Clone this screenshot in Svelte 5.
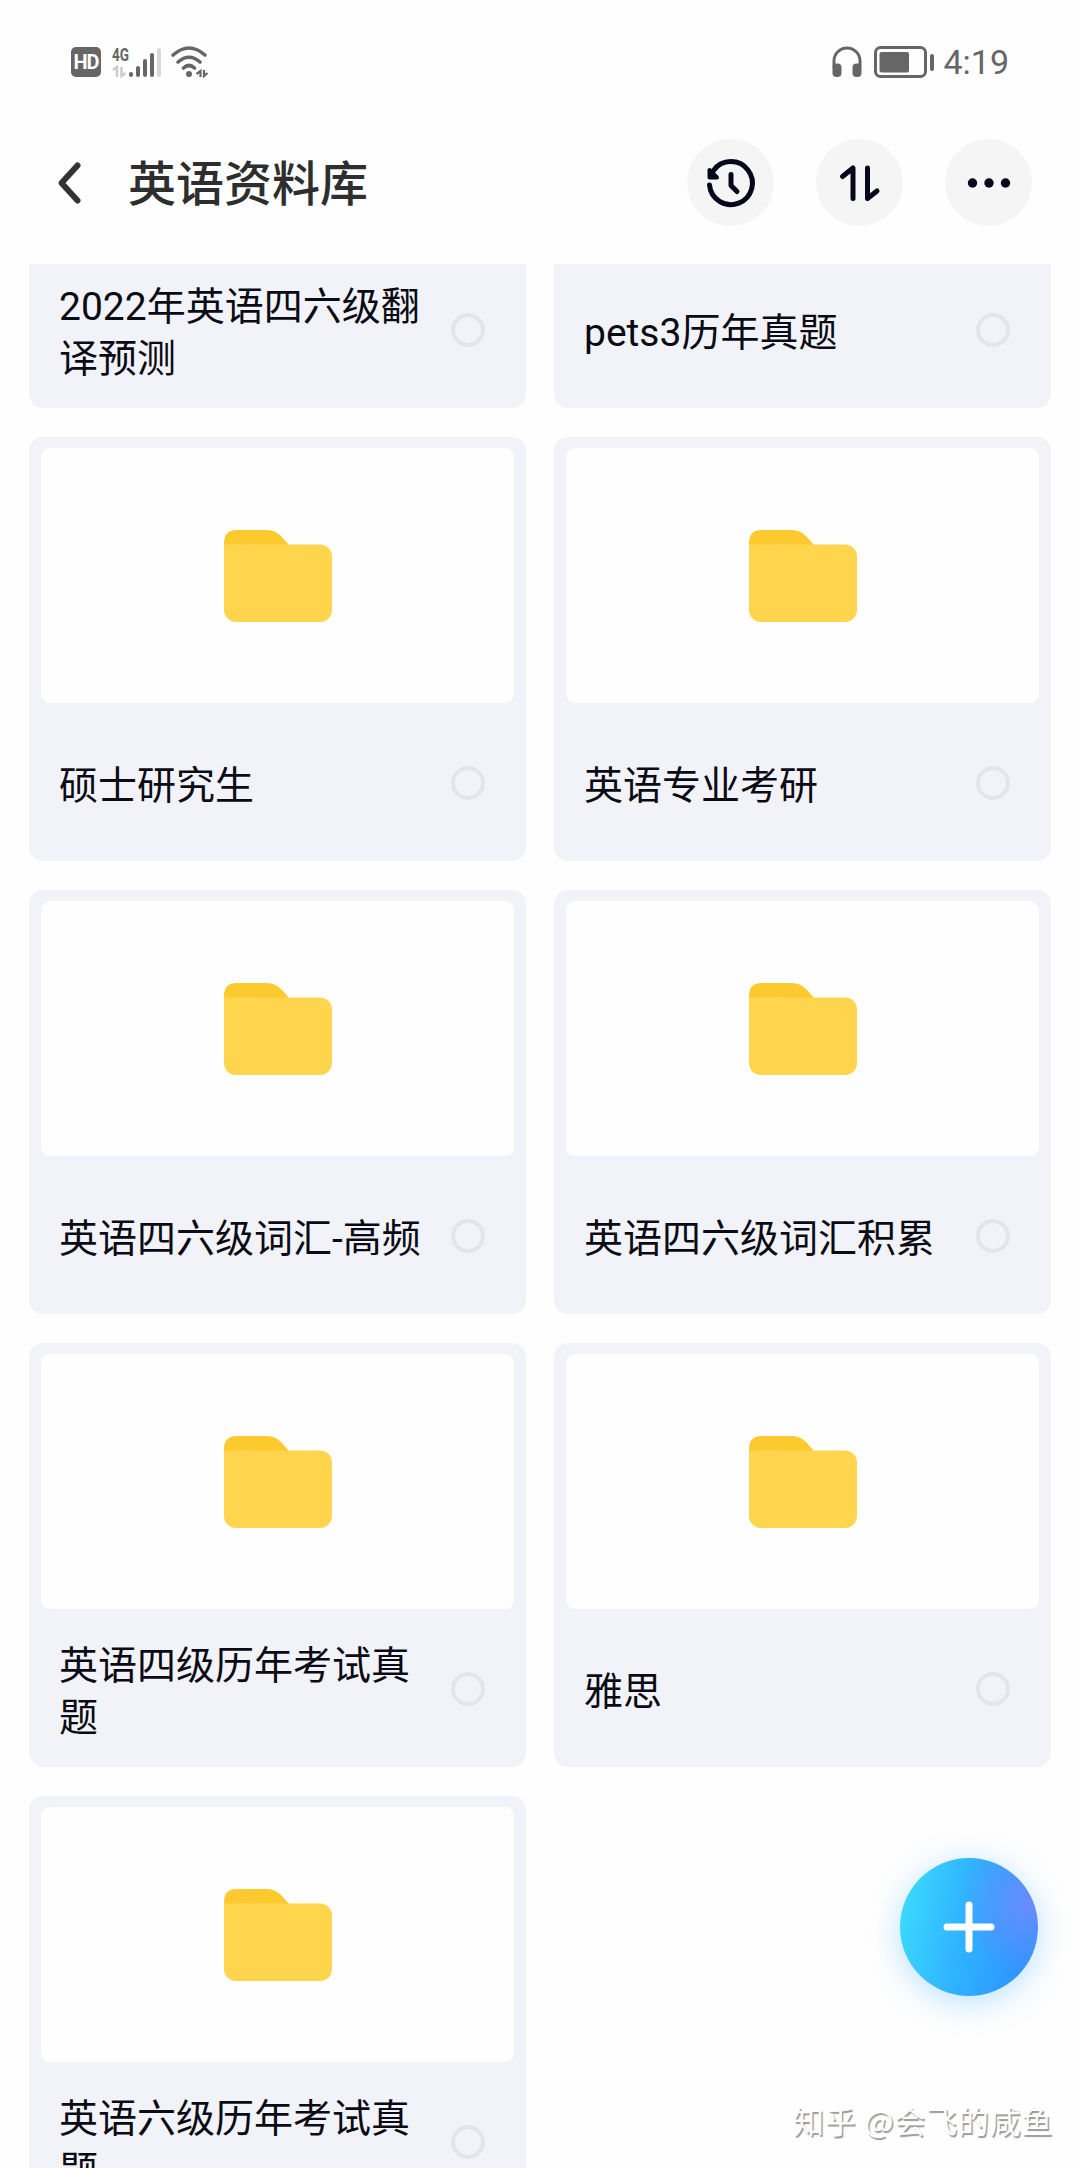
<script lang="ts">
    let folders = [
        "2022年英语四六级翻译预测",
        "pets3历年真题",
        "硕士研究生",
        "英语专业考研",
        "英语四六级词汇-高频",
        "英语四六级词汇积累",
        "英语四级历年考试真题",
        "雅思",
        "英语六级历年考试真题",
    ];
    let selected = $state<string[]>([]);

    function toggle(name: string) {
        selected = selected.includes(name)
            ? selected.filter((n) => n != name)
            : [...selected, name];
    }
</script>

<div class="screen">
    <div class="status">
        <div class="signals">
            <span class="hd">HD</span>
            <svg class="cell" width="50" height="32" viewBox="0 0 50 32">
                <text x="0" y="14.500" class="net" textLength="17" lengthAdjust="spacingAndGlyphs">4G</text>
                <path class="faint" d="M1 24l4-3v10M9.500 21v9l4-3" />
                <g class="bars">
                    <path d="M19 28v1M26 22v7M33 15v14M40 9v20" />
                    <path class="off" d="M47 4v25" />
                </g>
            </svg>
            <svg class="wifi" width="40" height="32" viewBox="0 0 40 32">
                <path d="M2 9Q18 -5 34 9M7 16Q18 6.500 29 16M12.500 22Q18 17 23.500 22" />
                <circle cx="18" cy="28" r="3" />
                <path class="arrows" d="M25.500 28l4-3v6M33 24v6l3.500-3" />
            </svg>
        </div>
        <div class="power">
            <svg width="30" height="32" viewBox="0 0 30 32">
                <path class="band" d="M2 22V15a13 13 0 0 1 26 0v7" />
                <rect x=".5" y="17.500" width="9" height="13.500" rx="4" />
                <rect x="20.500" y="17.500" width="9" height="13.500" rx="4" />
            </svg>
            <svg class="battery" width="62" height="32" viewBox="0 0 62 32">
                <rect class="case" x="1.500" y="1.500" width="50" height="29" rx="5" />
                <rect x="5.500" y="6" width="29.500" height="20.500" rx="2" />
                <rect x="56" y="8" width="4" height="17" rx="2" />
            </svg>
            <span class="time">4:19</span>
        </div>
    </div>

    <header>
        <button class="back" aria-label="返回">
            <svg width="24" height="42" viewBox="0 0 24 42">
                <path d="M20.500 3.500L4.500 21l16 17.500" />
            </svg>
        </button>
        <h1>英语资料库</h1>
        <button class="round" aria-label="历史">
            <svg width="52" height="52" viewBox="0 0 52 52">
                <path d="M4.500 28A21.500 21.500 0 1 0 8.500 13.500" />
                <path d="M26 17.500v11l6 6" />
                <path class="tip" d="M4.500 13v7.500H12z" />
            </svg>
        </button>
        <button class="round" aria-label="排序">
            <svg width="42" height="38" viewBox="0 0 42 38">
                <path d="M3.500 12.500l10.500-8.500v30.500M28.500 4v30.500l9.500-7.500" />
            </svg>
        </button>
        <button class="round" aria-label="更多">
            <svg class="dots" width="44" height="10" viewBox="0 0 44 10">
                <circle cx="5.500" cy="5" r="4.700" />
                <circle cx="22" cy="5" r="4.700" />
                <circle cx="38.500" cy="5" r="4.700" />
            </svg>
        </button>
    </header>

    <main>
        <div class="grid">
            {#each folders as name (name)}
                <div class="card">
                    <div class="thumb">
                        <svg width="108" height="92" viewBox="0 0 108 92">
                            <path fill="#fcc92f" d="M0 40V13Q0 0 13 0H43Q51 0 57 6L66 16V40z" />
                            <rect fill="#ffd54d" y="14.500" width="108" height="77.500" rx="12" />
                            <path fill="#ffd54d" d="M0 14.500h30v20H0z" />
                        </svg>
                    </div>
                    <div class="meta">
                        <span class="name">{name}</span>
                        <button
                            class="check"
                            class:on={selected.includes(name)}
                            aria-label={name}
                            onclick={() => toggle(name)}
                        ></button>
                    </div>
                </div>
            {/each}
        </div>
    </main>

    <button class="fab" aria-label="添加">
        <svg width="52" height="52" viewBox="0 0 52 52">
            <path d="M26 4v44M4 26h44" />
        </svg>
    </button>
    <div class="watermark">知乎 @会飞的咸鱼</div>
</div>

<style>
    :global(body) {
        background: #fefefe;
    }

    .screen {
        position: relative;
        width: 1080px;
        height: 2168px;
        overflow: hidden;
        display: flex;
        flex-direction: column;
        background: #fefefe;
        font-family: Roboto, "Noto Sans CJK SC", sans-serif;
    }

    button {
        border: 0;
        padding: 0;
        background: none;
        cursor: pointer;
    }

    svg {
        display: block;
        flex: none;
        overflow: visible;
    }

    .status {
        height: 123px;
        box-sizing: border-box;
        padding: 0 71px;
        display: flex;
        align-items: center;
        justify-content: space-between;
        color: #666;
        fill: #666;
    }

    .signals,
    .power {
        display: flex;
        align-items: center;
    }

    .hd {
        width: 30px;
        height: 30px;
        border-radius: 5px;
        background: #666;
        color: #fff;
        font-size: 20px;
        font-weight: 700;
        line-height: 31px;
        text-align: center;
        letter-spacing: -1px;
    }

    .cell {
        margin-left: 11px;
    }

    .net {
        font-size: 19px;
        font-weight: 700;
    }

    .faint {
        fill: none;
        stroke: #ccc;
        stroke-width: 2.5;
    }

    .bars {
        stroke: #666;
        stroke-width: 4;
        stroke-linecap: round;
    }

    .bars .off {
        stroke: #d8d8d8;
    }

    .wifi {
        margin-left: 9px;
    }

    .wifi path {
        fill: none;
        stroke: #666;
        stroke-width: 3.6;
        stroke-linecap: round;
    }

    .wifi .arrows {
        stroke-width: 2.2;
        stroke-linecap: butt;
    }

    .band,
    .case {
        fill: none;
        stroke: #666;
        stroke-width: 3;
    }

    .battery {
        margin-left: 12px;
    }

    .time {
        margin-left: 7px;
        font-size: 34px;
        line-height: 40px;
    }

    header {
        height: 119px;
        margin-bottom: 22px;
        padding: 0 48px 0 57px;
        display: flex;
        align-items: center;
    }

    .back path {
        fill: none;
        stroke: #333;
        stroke-width: 6;
        stroke-linecap: round;
        stroke-linejoin: round;
    }

    h1 {
        flex: 1;
        margin: 0 0 0 47px;
        padding-top: 5px;
        font-size: 48px;
        font-weight: 500;
        line-height: 60px;
        color: #2e2e2e;
    }

    .round {
        width: 87px;
        height: 87px;
        margin-left: 42px;
        border-radius: 50%;
        background: #f5f5f6;
        display: flex;
        align-items: center;
        justify-content: center;
    }

    .round path {
        fill: none;
        stroke: #05081a;
        stroke-width: 5;
        stroke-linecap: round;
        stroke-linejoin: round;
    }

    .round .tip {
        fill: #05081a;
        stroke-width: 4;
    }

    .dots {
        fill: #05081a;
    }

    main {
        flex: 1;
        min-height: 0;
        overflow: hidden;
    }

    /* list is scrolled past the first row of thumbnails */
    .grid {
        margin: -280px 29px 0;
        display: grid;
        grid-template-columns: 1fr 1fr;
        gap: 29px 28px;
    }

    .card {
        height: 424px;
        box-sizing: border-box;
        padding: 11px 12px 0;
        border-radius: 14px;
        background: #f2f3f8;
    }

    .thumb {
        height: 255px;
        border-radius: 9px;
        background: #fefefe;
        display: flex;
        align-items: center;
        justify-content: center;
    }

    .meta {
        height: 158px;
        padding: 2px 29px 0 18px;
        box-sizing: border-box;
        display: flex;
        align-items: center;
        justify-content: space-between;
    }

    .name {
        width: 372px;
        padding-top: 5px;
        font-size: 39px;
        line-height: 52px;
        color: #0a0b14;
    }

    .check {
        width: 34px;
        height: 34px;
        box-sizing: border-box;
        border: 4px solid #e4e5e9;
        border-radius: 50%;
    }

    .check.on {
        background: #2f9bff;
    }

    .fab {
        position: absolute;
        right: 42px;
        bottom: 172px;
        width: 138px;
        height: 138px;
        border-radius: 50%;
        background:
            radial-gradient(circle at 96% 32%, #6a8cff 0%, rgba(106, 140, 255, 0) 45%),
            linear-gradient(100deg, #3ddaff 4%, #2fb4ff 45%, #2f95ff 85%);
        box-shadow: 0 6px 32px rgba(60, 175, 255, 0.36);
        display: flex;
        align-items: center;
        justify-content: center;
    }

    .fab path {
        stroke: #fff;
        stroke-width: 7;
        stroke-linecap: round;
    }

    .watermark {
        position: absolute;
        right: 27px;
        bottom: 28px;
        font-family: "Noto Sans CJK SC", sans-serif;
        font-size: 31px;
        line-height: 40px;
        letter-spacing: 0.75px;
        color: #fff;
        text-shadow: 1.5px 1.5px 1px #999;
    }
</style>
